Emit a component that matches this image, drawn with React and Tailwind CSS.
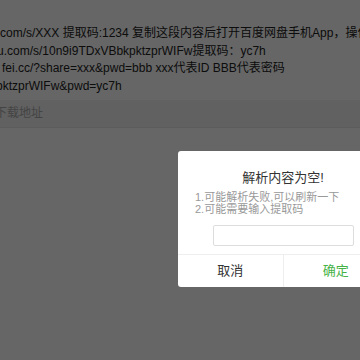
import React from 'react';

const font = { fontFamily: '"Liberation Sans", "Noto Sans CJK SC", sans-serif' };

const lines = [
  { text: 'com/s/XXX 提取码:1234 复制这段内容后打开百度网盘手机App，操作更方便哦', shift: 'ml-[0px]' },
  { text: 'u.com/s/10n9i9TDxVBbkpktzprWIFw提取码：yc7h', shift: '-ml-[3px]' },
  { text: 'fei.cc/?share=xxx&pwd=bbb xxx代表ID BBB代表密码', shift: 'ml-[2px]' },
  { text: 'pktzprWIFw&pwd=yc7h', shift: '-ml-[4px]' },
];

const App = () => {
  return (
    <div className="relative w-[360px] h-[360px] overflow-hidden bg-white" style={font}>
      <div className="pt-[25px]">
        {lines.map((l, i) => (
          <div key={i} className={`whitespace-nowrap text-[12px] leading-[17.7px] text-[#222] ${l.shift}`}>
            {l.text}
          </div>
        ))}
      </div>
      <div className="mt-[4px] h-[28px] flex items-center bg-[#f2f2f2] border-b border-[#e6e6e6]">
        <span className="-ml-[5px] text-[12px] text-[#aaa] whitespace-nowrap">下载地址</span>
      </div>

      <div className="absolute inset-0 bg-black/60" />

      <div className="absolute left-[178px] top-[151px] w-[210px] h-[136px] bg-white rounded-[3px] flex flex-col">
        <div className="pt-[18px] text-center text-[13px] leading-[18px] text-[#333]">解析内容为空!</div>
        <div className="pl-[17px] mt-[4px] text-[11px] leading-[12px] text-[#999]">
          <div>1.可能解析失败,可以刷新一下</div>
          <div>2.可能需要输入提取码</div>
        </div>
        <div className="mt-[10px] flex justify-center">
          <div className="w-[141px] h-[21px] border border-[#ddd] rounded-[2px]" />
        </div>
        <div className="mt-auto h-[33px] flex border-t border-[#eee] text-[13px]">
          <div className="flex-1 flex items-center justify-center text-[#333]">取消</div>
          <div className="flex-1 flex items-center justify-center text-[#46b246] border-l border-[#eee]">确定</div>
        </div>
      </div>
    </div>
  );
};

export default App;
